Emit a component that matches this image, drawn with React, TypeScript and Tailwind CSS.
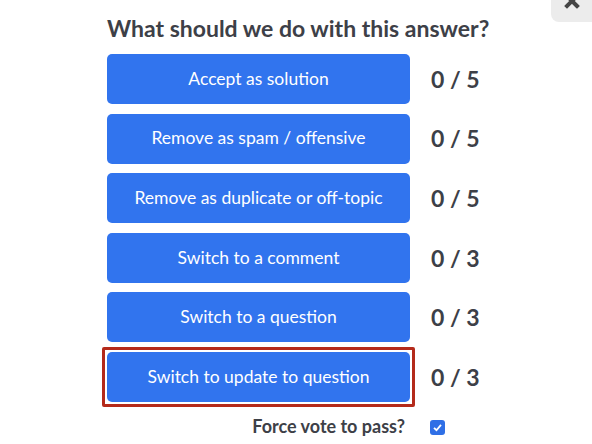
import React from 'react';

interface Action {
  label: string;
  votes: string;
  selected?: boolean;
}

const actions: Action[] = [
  { label: 'Accept as solution', votes: '0 / 5' },
  { label: 'Remove as spam / offensive', votes: '0 / 5' },
  { label: 'Remove as duplicate or off-topic', votes: '0 / 5' },
  { label: 'Switch to a comment', votes: '0 / 3' },
  { label: 'Switch to a question', votes: '0 / 3' },
  { label: 'Switch to update to question', votes: '0 / 3', selected: true },
];

function ActionButton({ label }: { label: string }) {
  return (
    <button className="h-[50px] w-[303px] rounded-[5px] bg-[#3174ee] text-[17.5px] text-white">
      {label}
    </button>
  );
}

export default function App() {
  return (
    <div className="relative w-[592px] h-[444px] overflow-hidden bg-white font-['Lato','Noto_Sans',sans-serif] text-[#3d4047]">
      {/* close tab, clipped by the top of the window */}
      <button className="absolute right-0 top-0 h-[22px] w-[41px] rounded-bl-[8px] bg-[#ececec]">
        <svg width="16" height="16" viewBox="0 0 16 16" className="absolute left-[13px] top-[-7px]">
          <path d="M3 3 L13 13 M13 3 L3 13" stroke="#454545" strokeWidth="4" strokeLinecap="square" />
        </svg>
      </button>

      <div className="flex flex-col pl-[107px] pt-[13px]">
        <h2 className="text-[23px] font-bold leading-[30px]">What should we do with this answer?</h2>

        <div className="mt-[11px] flex flex-col gap-[9.6px]">
          {actions.map((a) => (
            <div key={a.label} className="flex items-center">
              {a.selected ? (
                <div className="-m-[5px] rounded-[2px] border-[3px] border-[#b42a1b] p-[2px]">
                  <ActionButton label={a.label} />
                </div>
              ) : (
                <ActionButton label={a.label} />
              )}
              <span className="ml-[21px] text-[23px] font-bold">{a.votes}</span>
            </div>
          ))}
        </div>

        <div className="mt-[12px] flex w-[338px] items-center justify-end gap-[25px]">
          <span className="text-[18px] font-bold leading-[24px]">Force vote to pass?</span>
          <span className="mt-[4px] flex h-[15px] w-[15px] items-center justify-center rounded-[3px] bg-[#2f6fe6]">
            <svg width="11" height="11" viewBox="0 0 12 12">
              <path d="M2.2 6.3 L4.9 9 L9.8 3.2" fill="none" stroke="white" strokeWidth="2" />
            </svg>
          </span>
        </div>
      </div>
    </div>
  );
}
